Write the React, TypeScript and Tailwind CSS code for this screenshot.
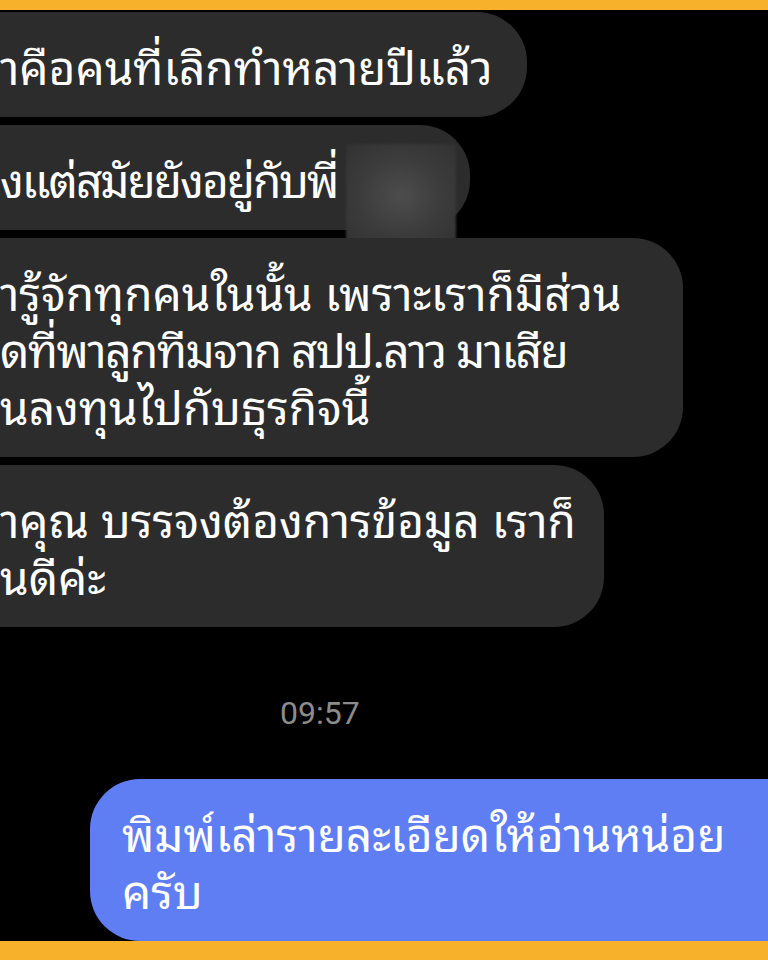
import React from "react"

const thai = { fontFamily: '"Noto Sans Thai Looped", "Noto Sans Thai", "Noto Sans", "DejaVu Sans", sans-serif' }

type Line = { text: string; tight?: string }

function LeftBubble({ lines, width, children }: { lines: Line[]; width: string; children?: React.ReactNode }) {
  return (
    <div className={`relative ${width} rounded-r-[50px] bg-[#2c2c2c] py-[24px] pr-6`}>
      {lines.map((l) => (
        <div key={l.text} className={`whitespace-pre-line text-[46px] leading-[57px] text-white ${l.tight ?? ""}`} style={thai}>
          {l.text}
        </div>
      ))}
      {children}
    </div>
  )
}

export default function App() {
  return (
    <div className="flex h-[960px] w-[768px] flex-col overflow-hidden bg-black">
      <div className="h-[10px] shrink-0 bg-[#f8b12b]" />

      <div className="flex flex-1 flex-col gap-2 pt-[2px]">
        <LeftBubble width="w-[527px]" lines={[{ text: "าคือคนที่เลิกทำหลายปีแล้ว" }]} />
        <LeftBubble width="w-[470px]" lines={[{ text: "งแต่สมัยยังอยู่กับพี่", tight: "tracking-[-2px]" }]}>
          {/* blurred name */}
          <div className="absolute left-[346px] top-[19px] h-[104px] w-[110px] bg-[radial-gradient(ellipse_at_center,#4d4d4d_0%,#3b3b3b_55%,#323232_100%)] blur-[1px]" />
        </LeftBubble>
        <LeftBubble
          width="w-[683px]"
          lines={[
            { text: "ารู้จักทุกคนในนั้น เพราะเราก็มีส่วน" },
            { text: "ดที่พาลูกทีมจาก สปป.ลาว มาเสีย", tight: "tracking-[-1.5px]" },
            { text: "นลงทุนไปกับธุรกิจนี้" },
          ]}
        />
        <LeftBubble width="w-[604px]" lines={[{ text: "าคุณ บรรจงต้องการข้อมูล เราก็\nนดีค่ะ" }]} />

        <div className="mt-[62px] pl-[280px] text-[32px] leading-[32px] text-[#8c8c8c]" style={{ fontFamily: "Roboto, sans-serif" }}>
          09:57
        </div>

        <div className="mt-auto flex justify-end">
          <div className="ml-[90px] w-[700px] rounded-l-[50px] bg-[#5f7ef3] py-[24px] pl-8">
            <div className="whitespace-pre-line text-[46px] leading-[57px] text-white" style={thai}>
              {"พิมพ์เล่ารายละเอียดให้อ่านหน่อย\nครับ"}
            </div>
          </div>
        </div>
      </div>

      <div className="h-[19px] shrink-0 bg-[#f8b12b]" />
    </div>
  )
}
